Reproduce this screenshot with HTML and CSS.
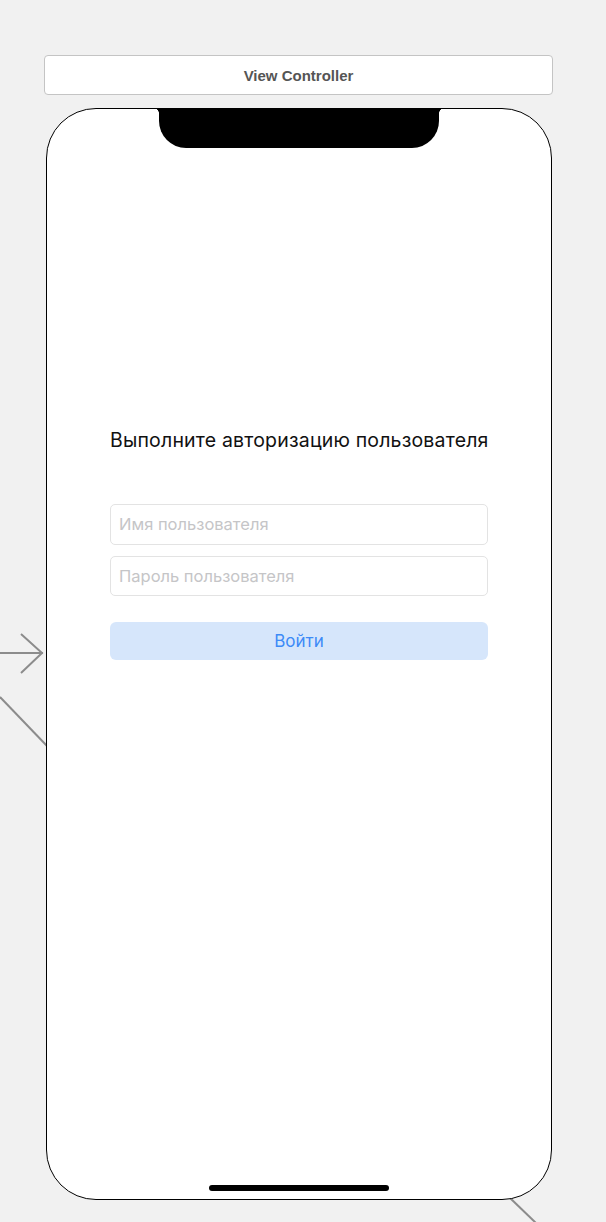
FILE: index.html
```html
<!DOCTYPE html>
<html lang="ru">
<head>
<meta charset="utf-8">
<title>View Controller</title>
<link rel="stylesheet" href="styles.css">
</head>
<body>
<div class="canvas">
  <svg class="connectors" width="606" height="1222" viewBox="0 0 606 1222">
    <line x1="0" y1="653" x2="43" y2="653"/>
    <polyline points="21,634 42,653 21,673" fill="none"/>
    <line x1="0" y1="697" x2="48" y2="747"/>
    <line x1="508" y1="1196" x2="537" y2="1224"/>
  </svg>
  <div class="titlebar">View Controller</div>
  <div class="phone">
    <div class="notch"></div>
    <div class="screen">
      <h1 class="heading">Выполните авторизацию пользователя</h1>
      <div class="field"><span class="placeholder">Имя пользователя</span></div>
      <div class="field field-gap"><span class="placeholder">Пароль пользователя</span></div>
      <div class="button">Войти</div>
    </div>
    <div class="home-indicator"></div>
  </div>
</div>
</body>
</html>
```

FILE: styles.css
```css
html, body {
  margin: 0;
  padding: 0;
  background: #f1f1f1;
}

.canvas {
  position: relative;
  width: 606px;
  height: 1222px;
  box-sizing: border-box;
  padding-top: 55px;
  overflow: hidden;
}

.connectors {
  position: absolute;
  left: 0;
  top: 0;
  z-index: 0;
}

.connectors line,
.connectors polyline {
  stroke: #8c8c8c;
  stroke-width: 2;
}

.titlebar {
  position: relative;
  z-index: 1;
  box-sizing: border-box;
  margin-left: 44px;
  width: 509px;
  height: 40px;
  padding-top: 1px;
  background: #ffffff;
  border: 1px solid #c4c4c4;
  border-radius: 4px;
  display: flex;
  align-items: center;
  justify-content: center;
  font-family: "Liberation Sans", Arial, sans-serif;
  font-weight: bold;
  font-size: 15px;
  color: #555555;
}

.phone {
  position: relative;
  z-index: 1;
  box-sizing: border-box;
  margin-top: 13px;
  margin-left: 46px;
  width: 506px;
  height: 1092px;
  background: #ffffff;
  border: 1.5px solid #000000;
  border-radius: 50px;
  display: flex;
  flex-direction: column;
  align-items: center;
}

.notch {
  position: absolute;
  top: -1px;
  left: 111.5px;
  width: 280px;
  height: 40px;
  background: #000000;
  border-radius: 0 0 27px 27px;
}

.notch::before,
.notch::after {
  content: "";
  position: absolute;
  top: 0;
  width: 5px;
  height: 5px;
}

.notch::before {
  left: -5px;
  background: radial-gradient(circle at 0 100%, transparent 4.5px, #000 5px);
}

.notch::after {
  right: -5px;
  background: radial-gradient(circle at 100% 100%, transparent 4.5px, #000 5px);
}

.screen {
  align-self: stretch;
  padding: 320px 0 0 63px;
  width: 378px;
  font-family: Inter, "Noto Sans", sans-serif;
}

.heading {
  margin: 0 0 53px 0;
  font-size: 19.5px;
  letter-spacing: 0.18px;
  line-height: 22px;
  font-weight: 400;
  color: #111111;
  white-space: nowrap;
}

.field {
  box-sizing: border-box;
  height: 40.5px;
  border: 1px solid #e3e3e3;
  border-radius: 5px;
  display: flex;
  align-items: center;
  padding-left: 8px;
}

.field-gap {
  margin-top: 11px;
}

.placeholder {
  font-size: 16.5px;
  color: #c5c5c7;
}

.button {
  margin-top: 26px;
  height: 38px;
  border-radius: 6px;
  background: #d6e6fb;
  color: #3d8af7;
  font-size: 17px;
  display: flex;
  align-items: center;
  justify-content: center;
}

.home-indicator {
  margin-top: auto;
  margin-bottom: 8px;
  width: 180px;
  height: 6px;
  border-radius: 3px;
  background: #000000;
}
```
